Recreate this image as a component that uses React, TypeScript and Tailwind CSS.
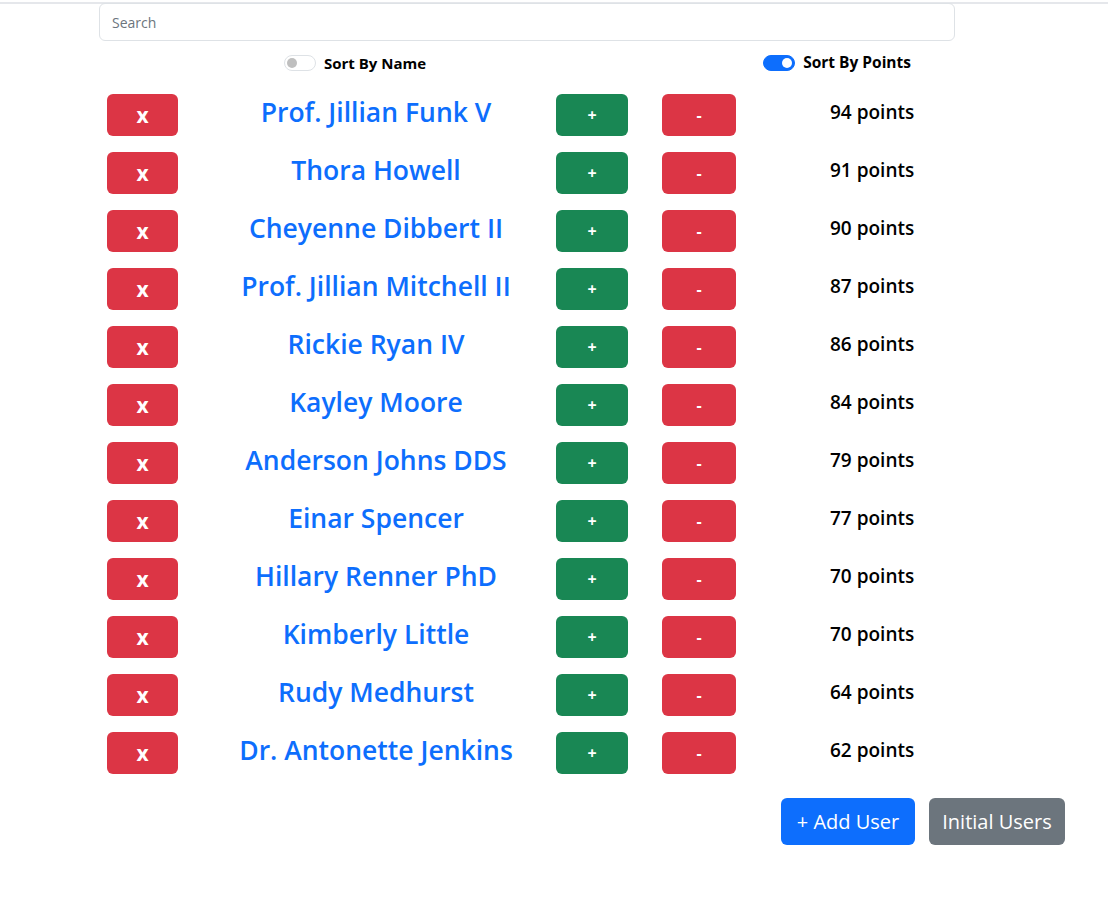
import React, { useState } from 'react';

interface User {
  id: number;
  name: string;
  points: number;
}

const initialUsers: User[] = [
  { id: 1, name: 'Prof. Jillian Funk V', points: 94 },
  { id: 2, name: 'Thora Howell', points: 91 },
  { id: 3, name: 'Cheyenne Dibbert II', points: 90 },
  { id: 4, name: 'Prof. Jillian Mitchell II', points: 87 },
  { id: 5, name: 'Rickie Ryan IV', points: 86 },
  { id: 6, name: 'Kayley Moore', points: 84 },
  { id: 7, name: 'Anderson Johns DDS', points: 79 },
  { id: 8, name: 'Einar Spencer', points: 77 },
  { id: 9, name: 'Hillary Renner PhD', points: 70 },
  { id: 10, name: 'Kimberly Little', points: 70 },
  { id: 11, name: 'Rudy Medhurst', points: 64 },
  { id: 12, name: 'Dr. Antonette Jenkins', points: 62 },
];

const Switch: React.FC<{ on: boolean; onClick: () => void }> = ({ on, onClick }) => (
  <button
    onClick={onClick}
    className={
      on
        ? 'w-[32px] h-[16px] rounded-full bg-[#0d6efd] border border-[#0d6efd] flex items-center justify-end px-[2px]'
        : 'w-[32px] h-[16px] rounded-full bg-white border border-[#dee2e6] flex items-center justify-start px-[2px]'
    }
  >
    <span className={on ? 'w-[10px] h-[10px] rounded-full bg-white' : 'w-[10px] h-[10px] rounded-full bg-[#bfbfbf]'} />
  </button>
);

const UserRow: React.FC<{ user: User; onRemove: () => void; onChange: (d: number) => void }> = ({
  user,
  onRemove,
  onChange,
}) => (
  <div className="flex items-center h-[42px]">
    <button
      onClick={onRemove}
      className="w-[71px] h-[42px] ml-[8px] pt-[2px] rounded-[6px] bg-[#dc3545] text-white text-[21px] font-bold"
    >
      x
    </button>
    <div className="w-[360px] ml-[18px] mb-[5px] text-center text-[26.5px] leading-none text-[#0d6efd] font-semibold">
      {user.name}
    </div>
    <button
      onClick={() => onChange(1)}
      className="w-[72px] h-[42px] rounded-[6px] bg-[#198754] text-white text-[16px] font-bold"
    >
      +
    </button>
    <button
      onClick={() => onChange(-1)}
      className="w-[74px] h-[42px] ml-[34px] rounded-[6px] bg-[#dc3545] text-white text-[16px] font-bold"
    >
      -
    </button>
    <div className="ml-[94px] mb-[6px] text-[19px] font-semibold text-black">{user.points} points</div>
  </div>
);

export default function App() {
  const [users, setUsers] = useState<User[]>(initialUsers);
  const [byName, setByName] = useState(false);
  const [byPoints, setByPoints] = useState(true);
  const [search, setSearch] = useState('');

  let list = users.filter((u) => u.name.toLowerCase().includes(search.toLowerCase()));
  if (byName) list = [...list].sort((a, b) => a.name.localeCompare(b.name));
  else if (byPoints) list = [...list].sort((a, b) => b.points - a.points);

  return (
    <div
      className="min-h-[899px] bg-white pt-[2px]"
      style={{ fontFamily: '"Open Sans", "Noto Sans", sans-serif' }}
    >
      <div className="border-t-2 border-[#e5e7eb]" />
      <div className="w-[856px] ml-[99px]">
        <input
          value={search}
          onChange={(e) => setSearch(e.target.value)}
          placeholder="Search"
          className="w-full h-[38px] -mt-[1px] px-[12px] rounded-[6px] border border-[#dee2e6] text-[14px] text-[#212529] placeholder:text-[#6c757d] outline-none"
        />
        <div className="flex items-center h-[42px] mt-[1px]">
          <div className="flex items-center gap-[8px] ml-[185px]">
            <Switch on={byName} onClick={() => { setByName(!byName); setByPoints(false); }} />
            <span className="text-[15px] font-bold text-black">Sort By Name</span>
          </div>
          <div className="flex items-center gap-[8px] ml-[337px]">
            <Switch on={byPoints} onClick={() => { setByPoints(!byPoints); setByName(false); }} />
            <span className="text-[15.5px] font-bold text-black">Sort By Points</span>
          </div>
        </div>
        <div className="flex flex-col gap-[16px] mt-[10px]">
          {list.map((u) => (
            <UserRow
              key={u.id}
              user={u}
              onRemove={() => setUsers(users.filter((x) => x.id !== u.id))}
              onChange={(d) => setUsers(users.map((x) => (x.id === u.id ? { ...x, points: x.points + d } : x)))}
            />
          ))}
        </div>
      </div>
      <div className="flex justify-end gap-[14px] w-[1065px] mt-[24px]">
        <button
          onClick={() => setUsers([...users, { id: Date.now(), name: 'New User', points: 0 }])}
          className="w-[134px] h-[47px] rounded-[6px] bg-[#0d6efd] text-white text-[20px]"
        >
          + Add User
        </button>
        <button
          onClick={() => setUsers(initialUsers)}
          className="w-[136px] h-[47px] rounded-[6px] bg-[#6c757d] text-white text-[20px]"
        >
          Initial Users
        </button>
      </div>
    </div>
  );
}
